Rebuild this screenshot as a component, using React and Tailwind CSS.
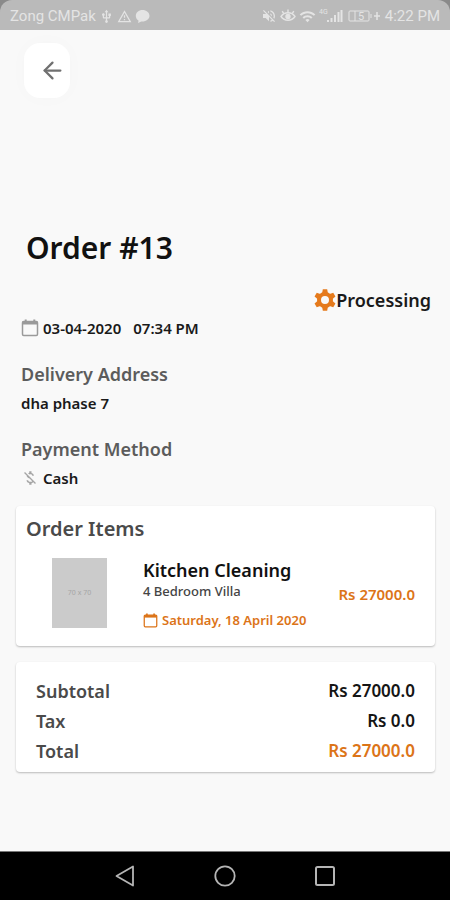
import React from 'react'
import { ArrowLeft } from 'lucide-react'
import { MdMoneyOff, MdUsb, MdOutlineWarningAmber, MdVolumeOff, MdWifi } from 'react-icons/md'

const order = {
  id: 13,
  status: 'Processing',
  date: '03-04-2020',
  time: '07:34 PM',
  address: 'dha phase 7',
  payment: 'Cash',
  items: [
    { name: 'Kitchen Cleaning', detail: '4 Bedroom Villa', date: 'Saturday, 18 April 2020', price: 'Rs 27000.0' },
  ],
}

const totals = [
  { label: 'Subtotal', value: 'Rs 27000.0', color: 'text-[#151515]' },
  { label: 'Tax', value: 'Rs 0.0', color: 'text-[#151515]' },
  { label: 'Total', value: 'Rs 27000.0', color: 'text-[#dc7418]' },
]

const teeth = [0, 60, 120, 180, 240, 300]

const GearIcon = () => (
  <svg width="22" height="24" viewBox="0 0 22 24" className="text-[#e57a1c]" fill="currentColor">
    <circle cx="11" cy="12" r="6" fill="none" stroke="currentColor" strokeWidth="4" />
    {teeth.map((deg) => (
      <path key={deg} d="M8.800 1.200h4.400l.9 5.300H7.900z" transform={`rotate(${deg} 11 12)`} />
    ))}
  </svg>
)

const CalendarIcon = ({ size, className }) => (
  <svg width={size} height={size} viewBox="0 0 18 18" className={className} fill="none" stroke="currentColor">
    <rect x="1.500" y="2.500" width="15" height="14" rx="1.200" strokeWidth="1.500" />
    <path d="M1.500 4h15" strokeWidth="3" />
    <path d="M4.700.5v3M13.300.5v3" strokeWidth="2" />
  </svg>
)

const StatusBar = () => (
  <div className="bg-[#8a8a8a]">
    <div className="flex h-[30px] items-center justify-between rounded-t-xl bg-[#bababa] px-[10px] pt-[2px] font-['Roboto',sans-serif] text-[15px] text-[#e4e4e4]">
      <div className="flex items-center gap-[3px]">
        <span>Zong CMPak</span>
        <MdUsb size={15} />
        <MdOutlineWarningAmber size={15} />
        <svg width="15" height="15" viewBox="0 0 15 15" fill="currentColor">
          <path d="M7.5 1C3.7 1 .8 3.600.8 6.800c0 2.200 1.200 3.900 2.800 4.900L3 14l3.300-1.500c4.500.4 8.200-2.200 8.200-5.700C14.500 3.600 11.300 1 7.500 1z" />
        </svg>
      </div>
      <div className="flex items-center gap-[3px]">
        <MdVolumeOff size={16} />
        <svg width="16" height="16" viewBox="0 0 16 16" fill="none" stroke="currentColor" strokeWidth="1.400">
          <path d="M1 8.500c3.500-5 10.500-5 14 0-3.500 5-10.500 5-14 0z" />
          <circle cx="8" cy="8.500" r="2" fill="currentColor" />
          <path d="M8 4.500v-3M3.700 5.500L2.200 3.200M12.300 5.500l1.500-2.300" />
        </svg>
        <MdWifi size={17} />
        <svg width="24" height="16" viewBox="0 0 24 16" fill="currentColor">
          <text x="0" y="6" fontSize="7">4G</text>
          <path d="M8 12h2v2H8zM11.500 10h2v4h-2zM15 7h2v7h-2zM18.500 4h2v10h-2zM21.500 2h2v12h-2z" />
        </svg>
        <svg width="36" height="14" viewBox="0 0 36 14" fill="none" stroke="currentColor">
          <rect x="3" y="2" width="20" height="10" rx="1" />
          <path d="M25 5v4M9 2v10" />
          <path d="M31 3v8M28 7h6" strokeWidth="1.500" />
          <text x="12" y="11" fontSize="11" fill="currentColor" stroke="none">5</text>
        </svg>
        <span>4:22 PM</span>
      </div>
    </div>
  </div>
)

const NavBar = () => (
  <nav className="flex h-[49px] items-center justify-center gap-[76px] border-t border-[#777] bg-black text-[#b5b5b5]">
    <button type="button" aria-label="Back">
      <svg width="24" height="24" viewBox="0 0 24 24" fill="none" stroke="currentColor" strokeWidth="1.800" strokeLinejoin="round">
        <path d="M20 2.500v19L3.500 12z" />
      </svg>
    </button>
    <button type="button" aria-label="Home">
      <svg width="24" height="24" viewBox="0 0 24 24" fill="none" stroke="currentColor" strokeWidth="1.800">
        <circle cx="12" cy="12" r="9.700" />
      </svg>
    </button>
    <button type="button" aria-label="Recent apps">
      <svg width="24" height="24" viewBox="0 0 24 24" fill="none" stroke="currentColor" strokeWidth="2">
        <rect x="3" y="3" width="18" height="18" rx="1.500" />
      </svg>
    </button>
  </nav>
)

const OrderItem = ({ item }) => (
  <div className="mt-[15px] flex pl-[26px]">
    <div className="flex h-[70px] w-[55px] shrink-0 items-center justify-center bg-[#cbcbcb] text-[7px] text-[#a5a5a5]">
      70 x 70
    </div>
    <div className="ml-9 flex-1">
      <h3 className="text-lg leading-6 font-semibold text-[#111]">{item.name}</h3>
      <p className="text-[13px] leading-[18px] font-medium text-[#444]">{item.detail}</p>
      <p className="mt-[10px] flex items-center gap-1 text-[13px] leading-5 font-semibold whitespace-nowrap text-[#dc7418]">
        <CalendarIcon size={15} />
        {item.date}
      </p>
    </div>
    <span className="mt-6 text-[15px] leading-6 font-semibold whitespace-nowrap text-[#dc7418]">{item.price}</span>
  </div>
)

const App = () => {
  return (
    <div className="flex min-h-screen flex-col bg-[#f9f9f9] font-['Noto_Sans',sans-serif]">
      <StatusBar />

      <main className="flex-1 pt-[13px] pr-[15px] pl-4">
        <button
          type="button"
          aria-label="Go back"
          className="ml-2 flex h-[55px] w-[46px] items-center justify-end rounded-2xl bg-white pr-1 text-[#707070] shadow-[0_0_20px_rgba(0,0,0,0.02)]"
        >
          <ArrowLeft size={27} strokeWidth={2} />
        </button>

        <h1 className="mt-[130px] ml-[10px] text-[30px] leading-10 font-semibold text-[#111]">Order #{order.id}</h1>

        <div className="mt-5 flex items-center justify-end pr-1">
          <GearIcon />
          <span className="text-lg leading-6 font-semibold text-[#1a1a1a]">{order.status}</span>
        </div>

        <div className="pl-[5px] text-[15px] leading-6 font-semibold text-[#1a1a1a]">
          <p className="mt-1 flex items-center gap-1">
            <CalendarIcon size={18} className="text-[#9a9a9a]" />
            <span>{order.date}</span>
            <span className="ml-2">{order.time}</span>
          </p>

          <h2 className="mt-[22px] text-lg leading-6 text-[#5c5c5c]">Delivery Address</h2>
          <p className="mt-[5px]">{order.address}</p>

          <h2 className="mt-[22px] text-lg leading-6 text-[#5c5c5c]">Payment Method</h2>
          <p className="mt-[5px] flex items-center gap-1">
            <MdMoneyOff size={18} className="text-[#a5a5a5]" />
            {order.payment}
          </p>
        </div>

        <section className="mt-4 rounded bg-white px-[10px] pt-[9px] pb-4 shadow-[0_1px_2px_rgba(0,0,0,0.25)]">
          <h2 className="text-xl leading-7 font-semibold text-[#4a4a4a]">Order Items</h2>
          <div className="pr-[10px]">
            {order.items.map((item) => (
              <OrderItem key={item.name} item={item} />
            ))}
          </div>
        </section>

        <section className="mt-4 rounded bg-white px-5 pt-[14px] pb-[6px] shadow-[0_1px_2px_rgba(0,0,0,0.25)]">
          <table className="w-full text-[17px] leading-[30px] font-semibold">
            <tbody>
              {totals.map((row) => (
                <tr key={row.label}>
                  <th scope="row" className="text-left text-lg leading-[30px] font-semibold text-[#4a4a4a]">{row.label}</th>
                  <td className={`text-right ${row.color}`}>{row.value}</td>
                </tr>
              ))}
            </tbody>
          </table>
        </section>
      </main>

      <NavBar />
    </div>
  )
}

export default App
